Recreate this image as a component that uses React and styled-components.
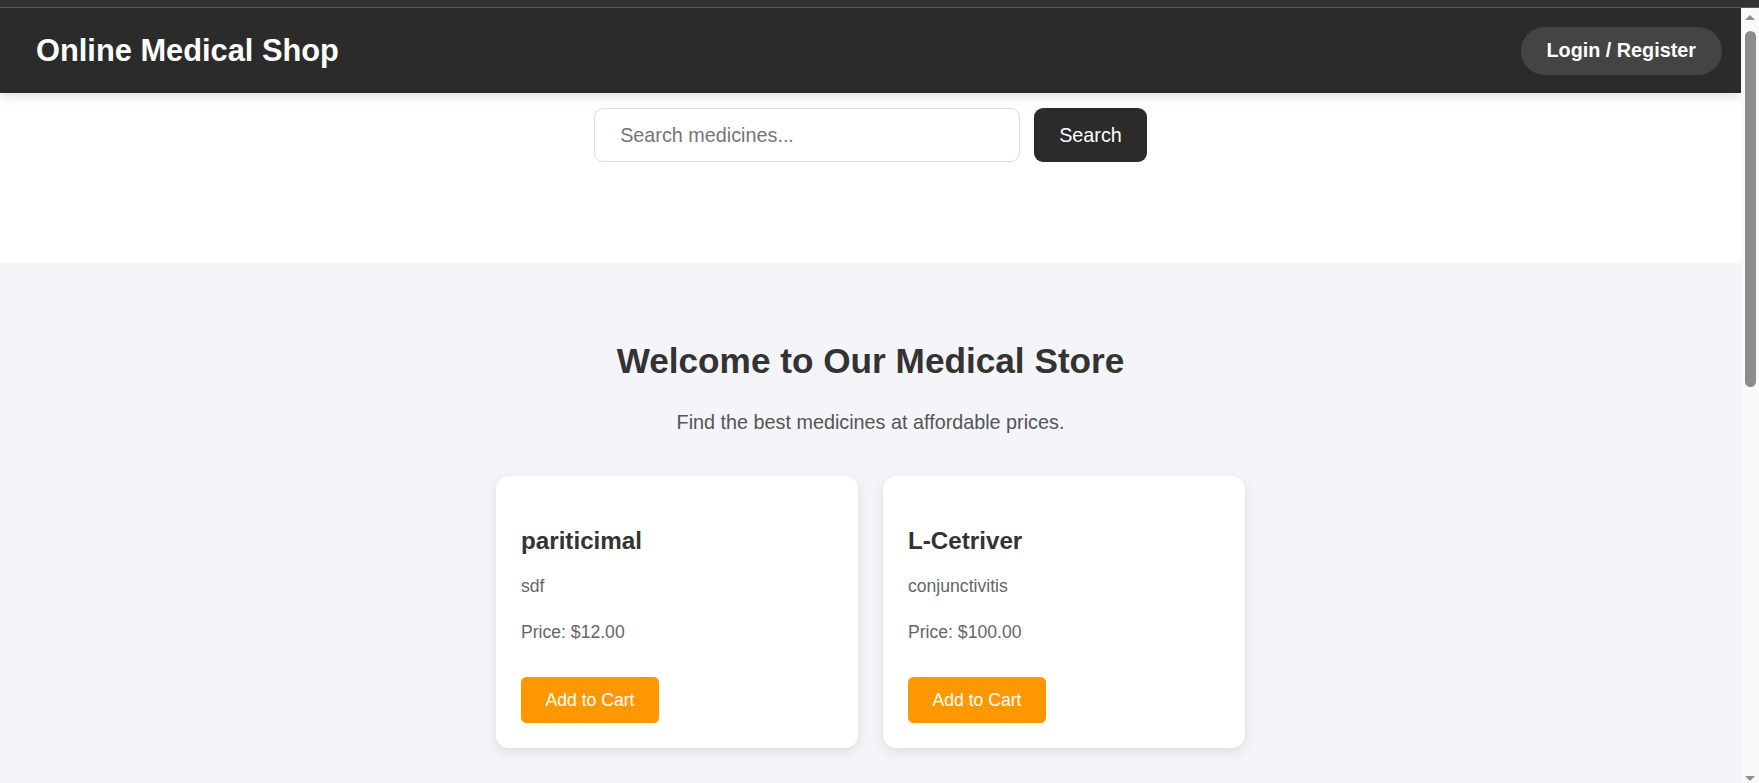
import React from 'react'
import styled, { createGlobalStyle } from 'styled-components'

const GlobalStyle = createGlobalStyle`
  body {
    margin: 0;
    background: #fff;
    font-family: "Liberation Sans", Arial, sans-serif;
  }
  * {
    box-sizing: border-box;
  }
`

const medicines = [
  { id: 1, name: 'pariticimal', description: 'sdf', price: 12 },
  { id: 2, name: 'L-Cetriver', description: 'conjunctivitis', price: 100 }
]

export default function App() {
  return (
    <>
      <GlobalStyle />
      <TopStrip />
      <Page>
        <Navbar>
          <Brand>Online Medical Shop</Brand>
          <LoginButton>Login / Register</LoginButton>
        </Navbar>

        <SearchSection>
          <SearchInput placeholder="Search medicines..." />
          <SearchButton>Search</SearchButton>
        </SearchSection>

        <Featured>
          <Heading>Welcome to Our Medical Store</Heading>
          <Subtitle>Find the best medicines at affordable prices.</Subtitle>

          <CardGrid>
            {medicines.map((m) => (
              <Card key={m.id}>
                <CardTitle>{m.name}</CardTitle>
                <CardText>{m.description}</CardText>
                <CardText $gap={25}>Price: ${m.price.toFixed(2)}</CardText>
                <CartButton>Add to Cart</CartButton>
              </Card>
            ))}
          </CardGrid>
        </Featured>
      </Page>

      {/* fake window scrollbar, headless hides the real one */}
      <ScrollTrack>
        <Arrow />
        <Thumb />
        <Arrow $down />
      </ScrollTrack>
    </>
  )
}

const TopStrip = styled.div`
  height: 8px;
  background: #333;
  border-bottom: 1px solid #5a5a5a;
`

const Page = styled.div`
  margin-right: 18px;
`

const ScrollTrack = styled.div`
  position: fixed;
  top: 8px;
  right: 0;
  bottom: 0;
  width: 18px;
  display: flex;
  flex-direction: column;
  align-items: center;
  padding: 7px 0 2px;
  background: #fafafa;
  z-index: 5;
`

const Arrow = styled.div`
  width: 0;
  height: 0;
  border-left: 5px solid transparent;
  border-right: 5px solid transparent;
  ${(p) =>
    p.$down
      ? 'border-top: 5px solid #8f8f8f; margin-top: auto;'
      : 'border-bottom: 5px solid #8f8f8f;'}
`

const Thumb = styled.div`
  width: 11px;
  height: 356px;
  margin-top: 11px;
  border-radius: 6px;
  background: #8c8c8c;
`

const Navbar = styled.header`
  position: relative;
  z-index: 2;
  height: 85px;
  display: flex;
  align-items: center;
  justify-content: space-between;
  padding: 0 19px 0 36px;
  background: #2b2b2b;
  box-shadow: 0 4px 10px rgba(0, 0, 0, 0.12);
`

const Brand = styled.h1`
  margin: 0;
  color: #fff;
  font-size: 30.8px;
  font-weight: bold;
`

const LoginButton = styled.button`
  height: 48px;
  padding: 0 26px;
  border: none;
  border-radius: 24px;
  background: #444;
  color: #fff;
  font-family: inherit;
  font-size: 19.8px;
  font-weight: bold;
  cursor: pointer;
`

const SearchSection = styled.section`
  height: 170px;
  display: flex;
  justify-content: center;
  align-items: flex-start;
  gap: 14px;
  padding-top: 15px;
`

const SearchInput = styled.input`
  width: 426px;
  height: 54px;
  padding: 0 25px;
  border: 1px solid #ddd;
  border-radius: 9px;
  font-family: inherit;
  font-size: 19.8px;
  color: #333;
  outline: none;

  &::placeholder {
    color: #757575;
  }
`

const SearchButton = styled.button`
  height: 54px;
  padding: 0 25px;
  border: none;
  border-radius: 9px;
  background: #2b2b2b;
  color: #fff;
  font-family: inherit;
  font-size: 19.8px;
  cursor: pointer;
`

const Featured = styled.section`
  min-height: 1600px;
  padding-top: 1px;
  background: #f4f4f9;
  text-align: center;
`

const Heading = styled.h2`
  margin: 77px 0 0;
  color: #333;
  font-size: 35.2px;
  font-weight: bold;
`

const Subtitle = styled.p`
  margin: 30px 0 0;
  color: #555;
  font-size: 19.8px;
`

const CardGrid = styled.div`
  display: flex;
  justify-content: center;
  gap: 25px;
  margin-top: 42px;
`

const Card = styled.div`
  width: 362px;
  padding: 0 25px 25px;
  background: #fff;
  border-radius: 13px;
  box-shadow: 0 4px 12px rgba(0, 0, 0, 0.1);
  text-align: left;
`

const CardTitle = styled.h3`
  margin: 51px 0 0;
  color: #333;
  font-size: 24.2px;
  font-weight: bold;
`

const CardText = styled.p`
  margin: ${(p) => p.$gap || 21}px 0 0;
  color: #666;
  font-size: 17.6px;
`

const CartButton = styled.button`
  height: 46px;
  margin-top: 34px;
  padding: 0 24.5px;
  border: none;
  border-radius: 5.5px;
  background: #ff9800;
  color: #fff;
  font-family: inherit;
  font-size: 17.6px;
  cursor: pointer;
`
